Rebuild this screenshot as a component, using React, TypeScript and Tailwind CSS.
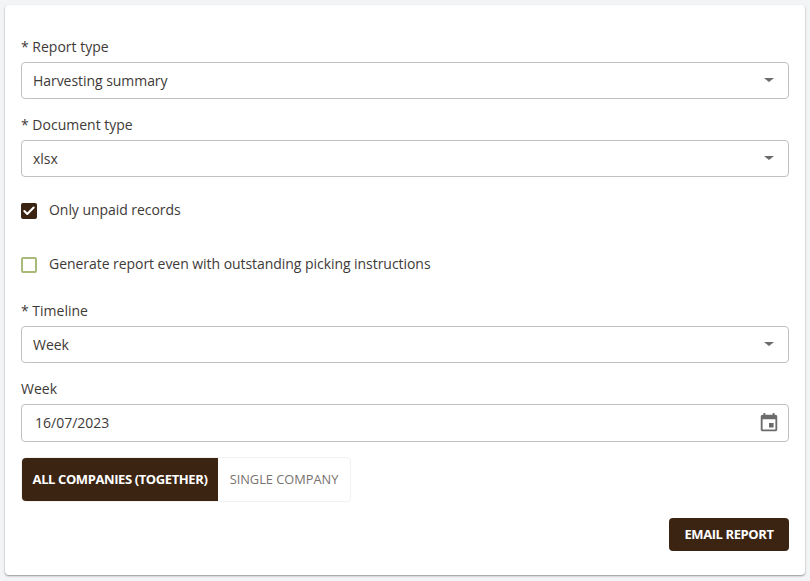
import { Check } from "lucide-react";

const font = "font-['Open_Sans',sans-serif]";

function Label({ children }: { children: string }) {
  return <div className="h-5 mb-[5px] text-[14px] leading-5 text-[#3e3a37]">{children}</div>;
}

// Select look-alike with the small caret on the right
function SelectField({ label, value }: { label: string; value: string }) {
  return (
    <div>
      <Label>{label}</Label>
      <div className="flex h-[37px] items-center justify-between rounded border border-[#c0c0c0] bg-white pl-[11px] pr-[14px] text-[14px] tracking-[-0.05px] text-[#3e3a37]">
        <span>{value}</span>
        <span className="-mt-0.5 h-0 w-0 border-x-[5px] border-t-[4px] border-x-transparent border-t-[#6b6b6b]" />
      </div>
    </div>
  );
}

export default function App() {
  return (
    <div className={`${font} h-[581px] w-[810px] overflow-hidden bg-[#f3f4f6] p-[5px]`}>
      <div className="h-[570px] rounded bg-white px-4 pt-8 shadow-[0_1px_2px_rgba(0,0,0,0.4)]">
        <SelectField label="* Report type" value="Harvesting summary" />
        <div className="mt-4">
          <SelectField label="* Document type" value="xlsx" />
        </div>

        {/* Checkboxes */}
        <div className="mt-[17px] flex h-[34px] items-center gap-3 text-[14px] tracking-[-0.05px] text-[#3e3a37]">
          <span className="flex h-4 w-4 items-center justify-center rounded-[2px] bg-[#3b2412]">
            <Check className="h-3.5 w-3.5 text-white" strokeWidth={3.5} />
          </span>
          <span className="-mt-1">Only unpaid records</span>
        </div>
        <div className="mt-5 flex h-[34px] items-center gap-3 text-[14px] tracking-[-0.05px] text-[#3e3a37]">
          <span className="h-4 w-4 rounded-[2px] border-2 border-[#a9b97a] bg-white" />
          <span className="-mt-1">Generate report even with outstanding picking instructions</span>
        </div>

        <div className="mt-[19px]">
          <SelectField label="* Timeline" value="Week" />
        </div>

        <div className="mt-4">
          <Label>Week</Label>
          <div className="flex h-[38px] items-center justify-between rounded border border-[#c0c0c0] bg-white pl-[13px] pr-2 text-[14px] text-[#3e3a37]">
            <span className="-mt-0.5">16/07/2023</span>
            <svg viewBox="0 0 24 24" className="h-[22px] w-[22px] fill-[#6b6b6b]">
              <path d="M17 12h-5v5h5v-5zM16 1v2H8V1H6v2H5c-1.11 0-1.99.9-1.99 2L3 19c0 1.1.89 2 2 2h14c1.1 0 2-.9 2-2V5c0-1.1-.9-2-2-2h-1V1h-2zm3 18H5V8h14v11z" />
            </svg>
          </div>
        </div>

        {/* Company toggle */}
        <div className="mt-[15px] flex h-[45px] w-[330px] rounded border border-[#f1f1f1]">
          <div className="flex w-[196px] items-center justify-center rounded-l bg-[#3b2412] text-[13px] font-bold tracking-[-0.4px] text-white">
            ALL COMPANIES (TOGETHER)
          </div>
          <div className="flex flex-1 items-center justify-center text-[12.8px] text-[#77736f]">SINGLE COMPANY</div>
        </div>

        <div className="mt-4 flex justify-end">
          <button className="h-[33px] w-[120px] rounded bg-[#3b2412] text-[13px] font-bold tracking-[-0.4px] text-white">
            EMAIL REPORT
          </button>
        </div>
      </div>
    </div>
  );
}
